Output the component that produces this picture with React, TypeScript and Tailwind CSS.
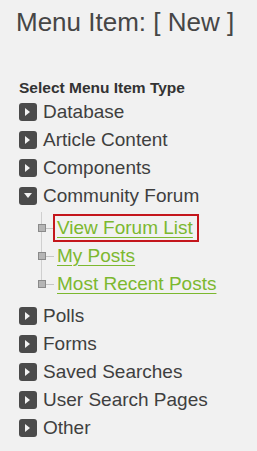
const before = ['Database', 'Article Content', 'Components'];
const after = ['Polls', 'Forms', 'Saved Searches', 'User Search Pages', 'Other'];
const forum = ['View Forum List', 'My Posts', 'Most Recent Posts'];

function Toggle({ open }: { open?: boolean }) {
  return (
    <span className="flex h-[18px] w-[18px] shrink-0 items-center justify-center rounded-[3px] bg-[#4b4b4b]">
      {open ? (
        <svg width="8" height="6" viewBox="0 0 8 6">
          <path d="M0 0H8L4 5Z" fill="#f2f2f2" />
        </svg>
      ) : (
        <svg width="6" height="8" viewBox="0 0 6 8">
          <path d="M0 0V8L5 4Z" fill="#f2f2f2" />
        </svg>
      )}
    </span>
  );
}

function Row({ label, open }: { label: string; open?: boolean }) {
  return (
    <li className="flex h-[28px] items-center gap-[6px]">
      <Toggle open={open} />
      <span className="text-[19px] text-[#3f3f3f]">{label}</span>
    </li>
  );
}

export default function App() {
  return (
    <div className="min-h-[451px] w-[257px] bg-[#f1f1f1] font-['Liberation_Sans',Arial,sans-serif] text-[#444]">
      <h1 className="pl-[16px] pt-[7px] text-[26px] leading-[30px] text-[#464646]">Menu Item: [ New ]</h1>

      <div className="pl-[19px] pt-[42px]">
        <h2 className="text-[15.5px] font-bold leading-[18px] text-[#333]">Select Menu Item Type</h2>
        <ul className="pt-[1px]">
          {before.map((l) => (
            <Row key={l} label={l} />
          ))}
          <Row label="Community Forum" open />
          <li className="relative pt-[4px] pb-[4px]">
            <span className="absolute left-[22px] top-[2px] bottom-[14px] w-px bg-[#cfcfcf]" />
            <ul>
              {forum.map((l, i) => (
                <li key={l} className="flex h-[28px] items-center">
                  <span className="relative z-10 ml-[19px] h-[8px] w-[8px] shrink-0 border border-[#8a8a8a] bg-[#b5b5b5]" />
                  <span className="h-px w-[8px] bg-[#c6c6c6]" />
                  <span
                    className={
                      i === 0
                        ? 'ml-[-1px] border-2 border-[#c4161c] pl-[2px] pr-[4px] leading-[23px]'
                        : 'ml-[3px]'
                    }
                  >
                    <span className="text-[19px] text-[#7cb82f] underline decoration-1 underline-offset-[3px]">{l}</span>
                  </span>
                </li>
              ))}
            </ul>
          </li>
          {after.map((l) => (
            <Row key={l} label={l} />
          ))}
        </ul>
      </div>
    </div>
  );
}
